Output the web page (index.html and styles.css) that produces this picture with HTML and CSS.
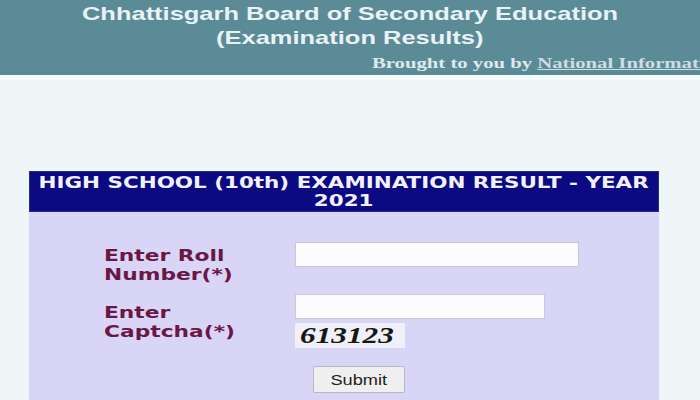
FILE: index.html
```html
<!DOCTYPE html>
<html>
<head>
<meta charset="utf-8">
<link rel="stylesheet" href="styles.css">
</head>
<body>
<header class="top">
  <div class="title"><span class="sx sx-c">Chhattisgarh Board of Secondary Education</span></div>
  <div class="title"><span class="sx sx-c">(Examination Results)</span></div>
  <div class="credit"><span class="sx sx-l">Brought to you by <a href="#">National Informatics Centre</a></span></div>
</header>
<div class="strip"></div>
<main class="page">
  <section class="box">
    <h1 class="boxhead"><span class="sx sx-c">HIGH SCHOOL (10th) EXAMINATION RESULT - YEAR<br>2021</span></h1>
    <form class="form">
      <label class="lbl lbl-roll"><span class="sx sx-l">Enter Roll<br>Number(*)</span></label>
      <div class="field"><input class="inp inp-roll" type="text"></div>
      <label class="lbl lbl-cap"><span class="sx sx-l">Enter<br>Captcha(*)</span></label>
      <div class="field field-cap">
        <input class="inp inp-cap" type="text">
        <div class="captcha"><span class="sx sx-l">613123</span></div>
      </div>
      <div class="actions"><button class="btn" type="button"><span class="sx sx-c">Submit</span></button></div>
    </form>
  </section>
</main>
</body>
</html>
```

FILE: styles.css
```css
html, body {
  margin: 0;
  padding: 0;
  width: 700px;
  height: 400px;
  overflow: hidden;
  background: #eef6f7;
}
.sx {
  display: inline-block;
  white-space: nowrap;
  transform: scaleX(1.36);
}
.sx-c { transform-origin: center center; }
.sx-l { transform-origin: left center; }
.top {
  height: 75px;
  background: #5b8b97;
  color: #e9f2f4;
  box-sizing: border-box;
  padding-top: 2px;
  overflow: hidden;
  white-space: nowrap;
}
.title {
  font-family: "Liberation Sans", Arial, sans-serif;
  font-weight: bold;
  font-size: 19px;
  line-height: 24px;
  text-align: center;
}
.title .sx { transform: scaleX(1.34); }
.credit {
  font-family: "Liberation Serif", "Times New Roman", serif;
  font-weight: bold;
  font-size: 15px;
  line-height: 16px;
  margin-top: 5px;
  padding-left: 372px;
  color: #dfe9ec;
}
.credit .sx { transform: scaleX(1.38); }
.credit a {
  color: #cfdde0;
  text-decoration: underline;
}
.strip {
  height: 5px;
  background: #f6fbfb;
}
.page {
  padding: 91px 0 0 29px;
}
.box {
  width: 630px;
  background: #d8d5f7;
  height: 240px;
}
.boxhead {
  margin: 0;
  background: #0b0a82;
  color: #f2f2ff;
  font-family: "DejaVu Sans", Verdana, sans-serif;
  font-weight: bold;
  font-size: 16px;
  line-height: 18px;
  text-align: center;
  padding: 2px 0 1px;
  border: 1px solid #2a2a8a;
}
.boxhead .sx { transform: scaleX(1.34); }
.form {
  display: grid;
  grid-template-columns: 191px 1fr;
  padding: 30px 0 0 75px;
}
.lbl {
  grid-column: 1;
  font-family: "DejaVu Sans", Verdana, sans-serif;
  font-weight: bold;
  font-size: 16px;
  line-height: 19px;
  color: #6b1744;
}
.lbl .sx { transform: scaleX(1.36); }
.lbl-roll { padding-top: 4px; }
.lbl-cap { padding-top: 19px; }
.field {
  grid-column: 2;
}
.field-cap {
  margin-top: 10px;
}
.inp {
  display: block;
  box-sizing: border-box;
  height: 25px;
  border: 1px solid #c9c8d8;
  background: #fcfcff;
  margin: 0;
}
.inp-roll { width: 284px; }
.inp-cap { width: 250px; }
.captcha {
  margin-top: 4px;
  width: 110px;
  height: 25px;
  background: #f0f0f8;
  font-family: "Liberation Serif", "Times New Roman", serif;
  font-style: italic;
  font-weight: bold;
  font-size: 23px;
  line-height: 25px;
  padding-left: 5px;
  box-sizing: border-box;
  color: #161616;
}
.actions {
  grid-column: 1 / 3;
  padding-left: 209px;
  padding-top: 18px;
}
.btn {
  display: block;
  width: 92px;
  height: 27px;
  padding: 0;
  font-family: "Liberation Sans", Arial, sans-serif;
  font-size: 14px;
  color: #222;
  background: #efefef;
  border: 1px solid #b8b8c4;
  border-radius: 2px;
}
.btn .sx { transform: scaleX(1.3); }
```
